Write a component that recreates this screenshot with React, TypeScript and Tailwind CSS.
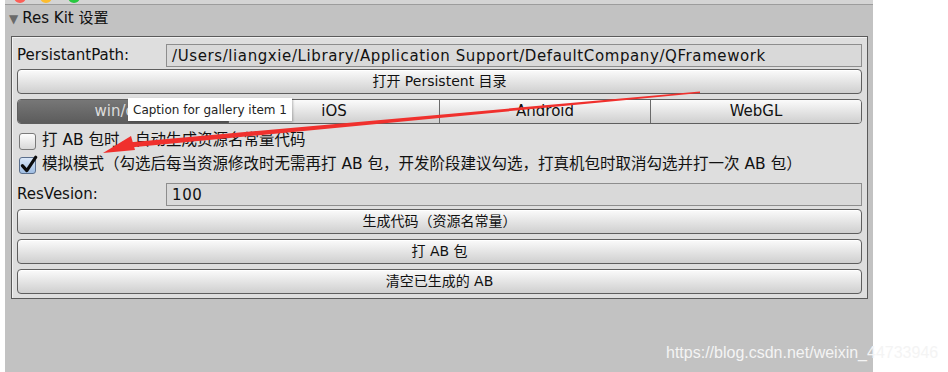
import React from "react";

const font = { fontFamily: '"DejaVu Sans", "Noto Sans CJK SC", sans-serif' };

function UnityButton({ label }: { label: string }) {
  return (
    <button className="h-[25px] w-full rounded-[4px] border border-[#5e5e5e] bg-gradient-to-b from-[#fbfbfb] to-[#cfcfcf] text-[14px] text-[#111] shadow-[inset_0_1px_0_#ffffff]">
      {label}
    </button>
  );
}

function Field({ value }: { value: string }) {
  return (
    <div className="h-[23px] flex-1 border border-[#8d8d8d] bg-[#d9d9d9] pl-[5px] text-[15px] leading-[22px] tracking-[0.6px] text-[#111]">
      {value}
    </div>
  );
}

function Check({ checked, label }: { checked?: boolean; label: string }) {
  return (
    <div className="flex h-[24px] items-center gap-[6px] pl-[2px]">
      <div
        className={
          checked
            ? "relative h-[17px] w-[17px] rounded-[3px] border border-[#5b6f8c] bg-gradient-to-b from-[#dbe8f8] to-[#9fbde2]"
            : "relative h-[17px] w-[17px] rounded-[3px] border border-[#7a7a7a] bg-gradient-to-b from-[#fdfdfd] to-[#d8d8d8]"
        }
      >
        {checked && (
          <svg viewBox="0 0 17 17" className="absolute -left-[1px] -top-[3px] h-[19px] w-[19px]">
            <path d="M3 9.5 L7 14 L15 2" fill="none" stroke="#0c0c0c" strokeWidth="2.8" strokeLinecap="round" strokeLinejoin="round" />
          </svg>
        )}
      </div>
      <span className="text-[15.5px] text-[#111]">{label}</span>
    </div>
  );
}

export default function App() {
  const tabs = ["win/osx", "iOS", "Android", "WebGL"];
  return (
    <div className="relative flex h-[372px] w-[948px] overflow-hidden bg-white" style={font}>
      <div className="ml-[5px] flex h-full w-[868px] flex-col bg-[#c2c2c2]">
        {/* window top strip */}
        <div className="relative h-[5px] border-b border-[#9c9c9c] bg-[#d4d4d4]">
          <div className="absolute left-[9px] top-[-9px] h-[12px] w-[12px] rounded-full bg-[#fc5f57]" />
          <div className="absolute left-[35px] top-[-9px] h-[12px] w-[12px] rounded-full bg-[#fdbc2e]" />
          <div className="absolute left-[63px] top-[-9px] h-[12px] w-[12px] rounded-full bg-[#28c840]" />
        </div>

        {/* foldout header */}
        <div className="flex h-[27px] items-center gap-[4px] pl-[4px]">
          <span className="text-[12px] text-[#6a6a6a]">▼</span>
          <span className="text-[15px] text-[#111]">Res Kit 设置</span>
        </div>

        {/* settings box */}
        <div className="ml-[6px] mt-[4px] w-[857px] border border-[#5a5a5a] bg-[#dedede] px-[5px] pb-[4px] pt-[7px] shadow-[inset_1px_1px_0_#f2f2f2]">
          <div className="flex h-[23px] items-center">
            <span className="w-[149px] text-[15px] text-[#111]">PersistantPath:</span>
            <Field value="/Users/liangxie/Library/Application Support/DefaultCompany/QFramework" />
          </div>
          <div className="mt-[2px]">
            <UnityButton label="打开 Persistent 目录" />
          </div>

          <div className="mt-[5px] flex h-[25px] overflow-hidden rounded-[4px] border border-[#5e5e5e]">
            {tabs.map((t, i) => (
              <div
                key={t}
                className={
                  i === 0
                    ? "flex flex-1 items-center justify-center bg-gradient-to-b from-[#777] to-[#5c5c5c] text-[15px] text-[#dcdcdc]"
                    : "flex flex-1 items-center justify-center border-l border-[#6a6a6a] bg-gradient-to-b from-[#fbfbfb] to-[#cfcfcf] text-[15px] text-[#111]"
                }
              >
                {t}
              </div>
            ))}
          </div>

          <div className="mt-[5px]">
            <Check label="打 AB 包时，自动生成资源名常量代码" />
            <Check checked label="模拟模式（勾选后每当资源修改时无需再打 AB 包，开发阶段建议勾选，打真机包时取消勾选并打一次 AB 包）" />
          </div>

          <div className="mt-[6px] flex h-[23px] items-center">
            <span className="w-[149px] text-[15px] text-[#111]">ResVesion:</span>
            <Field value="100" />
          </div>

          <div className="mt-[3px] flex flex-col gap-[5px]">
            <UnityButton label="生成代码（资源名常量）" />
            <UnityButton label="打 AB 包" />
            <UnityButton label="清空已生成的 AB" />
          </div>
        </div>
      </div>

      {/* tooltip */}
      <div className="absolute left-[128px] top-[98px] flex h-[23px] items-center bg-white px-[5px] text-[12px] text-[#222] shadow-[1px_1px_2px_rgba(0,0,0,0.25)]">
        Caption for gallery item 1
      </div>

      {/* red annotation arrow */}
      <svg className="pointer-events-none absolute left-0 top-0" width="948" height="372">
        <polygon points="700,91.5 700,93 130,147.5 128,142.5" fill="#f0302d" />
        <polygon points="103,153 131,136 135,150" fill="#f0302d" />
      </svg>

      {/* watermark */}
      <div
        className="absolute left-[666px] top-[341px] text-[16px] text-[#f4f4f4]"
        style={{ fontFamily: '"Liberation Sans", Arial, sans-serif' }}
      >
        https://blog.csdn.net/weixin_44733946
      </div>
    </div>
  );
}
